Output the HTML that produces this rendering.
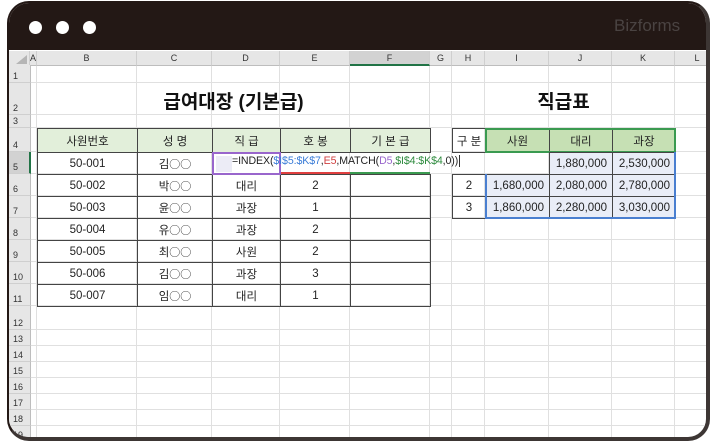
<!DOCTYPE html><html><head><meta charset="utf-8"><style>
body{margin:0;width:715px;height:440px;background:#fff;overflow:hidden;font-family:"Liberation Sans","Noto Sans CJK KR",sans-serif}
.frame{position:absolute;left:7px;top:1px;width:697px;height:434px;border:2px solid #231815;border-right:4px solid #3d3634;border-bottom:4px solid #3d3634;border-radius:22px;overflow:hidden;background:#fff}
.a{position:absolute}
.ch{position:absolute;top:48px;height:15px;background:#e6e6e6;border-right:1px solid #cfcfcf;border-bottom:1px solid #bdbdbd;font-size:9px;color:#333;text-align:center;line-height:15px;box-sizing:border-box}
.rh{position:absolute;left:0;width:22px;background:#e6e6e6;border-bottom:1px solid #cfcfcf;border-right:1px solid #bdbdbd;font-size:9px;color:#333;box-sizing:border-box;padding-left:4px;display:flex;align-items:flex-end;padding-bottom:1px}
.vl{position:absolute;top:63px;bottom:0;width:1px;background:#e0e0e0}
.hl{position:absolute;left:22px;right:0;height:1px;background:#e0e0e0}
.c{position:absolute;font-size:11.5px;color:#222;text-align:center;box-sizing:border-box;display:flex;align-items:center;justify-content:center}
.r{justify-content:flex-end;padding-right:5px}
.o{font-family:"Noto Sans CJK KR",sans-serif;font-size:11px}
</style></head><body><div class="frame" id="f">
<div class="a" style="left:0;top:0;right:0;height:47px;background:#231815"></div>
<div class="a" style="left:20px;top:18px;width:13px;height:13px;border-radius:50%;background:#fff"></div>
<div class="a" style="left:47px;top:18px;width:13px;height:13px;border-radius:50%;background:#fff"></div>
<div class="a" style="left:74px;top:18px;width:13px;height:13px;border-radius:50%;background:#fff"></div>
<div class="a" style="left:605px;top:13px;font-size:17px;color:#4a4342">Bizforms</div>
</div>
<script>
var f=document.getElementById('f');var h='';
var ox=9,oy=3;
var cols=[['',8,30],['A',30,37],['B',37,137],['C',137,212],['D',212,280],['E',280,350],['F',350,430],['G',430,452],['H',452,485],['I',485,549],['J',549,612],['K',612,675],['L',675,720]];
var rows=[[1,65,83],[2,83,115],[3,115,128],[4,128,152],[5,152,174],[6,174,196],[7,196,218],[8,218,240],[9,240,262],[10,262,284],[11,284,306],[12,306,330],[13,330,346],[14,346,362],[15,362,378],[16,378,394],[17,394,410],[18,410,426],[19,426,442]];
function box(x1,y1,x2,y2,st){return '<div class="a" style="left:'+(x1-ox)+'px;top:'+(y1-oy)+'px;width:'+(x2-x1)+'px;height:'+(y2-y1)+'px;'+st+'"></div>';}
function cell(x1,y1,x2,y2,t,cls,st){return '<div class="c '+(cls||'')+'" style="left:'+(x1-ox)+'px;top:'+(y1-oy)+'px;width:'+(x2-x1)+'px;height:'+(y2-y1)+'px;'+(st||'')+'">'+t+'</div>';}
cols.forEach(function(c){if(c[1]>8)h+='<div class="vl" style="left:'+(c[1]-ox-1)+'px"></div>';});
rows.forEach(function(r){h+='<div class="hl" style="top:'+(r[2]-oy-1)+'px"></div>';});
cols.forEach(function(c){h+='<div class="ch" style="left:'+(c[1]-ox)+'px;width:'+(c[2]-c[1])+'px;'+(c[0]=='F'?'background:#d2d2d2;border-bottom:2px solid #217346':'')+'">'+c[0]+'</div>';});
h+='<div class="a" style="left:7px;top:52px;border-left:11px solid transparent;border-bottom:9px solid #b5b5b5"></div>';
rows.forEach(function(r){h+='<div class="rh" style="top:'+(r[1]-oy)+'px;height:'+(r[2]-r[1])+'px;'+(r[0]==5?'background:#d2d2d2;border-right:2px solid #217346':'')+'">'+r[0]+'</div>';});
h+=cell(37,83,430,115,'급여대장 (기본급)','','font-size:19px;font-weight:bold;color:#111;padding-top:2px');
h+=cell(452,83,675,115,'직급표','','font-size:19px;font-weight:bold;color:#111;padding-top:2px');
var B=[37,137,212,280,350,430];var bd='border:1px solid #444;';
var hd=['사원번호','성 명','직 급','호 봉','기 본 급'];
for(var i=0;i<5;i++)h+=cell(B[i],128,B[i+1]+1,153,hd[i],'','background:#e2efda;'+bd);
var O='<span class="o">○○</span>';
var data=[['50-001','김'+O,'',''],['50-002','박'+O,'대리','2'],['50-003','윤'+O,'과장','1'],['50-004','유'+O,'과장','2'],['50-005','최'+O,'사원','2'],['50-006','김'+O,'과장','3'],['50-007','임'+O,'대리','1']];
data.forEach(function(d,k){var y=152+k*22;for(var i=0;i<5;i++)h+=cell(B[i],y,B[i+1]+1,y+23,i<4?d[i]:'','',bd+(k==0&&i>=2?'border-color:transparent;':''));});
h+=box(212,152,281,175,'border:2px solid #9966cc;box-sizing:border-box;background:#fff');
h+=box(216,156,232,172,'background:#ececf6');
h+=box(281,172,350,174,'background:#e04040');
h+=box(350,172,430,174,'background:#3a9a50');
h+='<div class="a" style="left:'+(232-ox)+'px;top:'+(155-oy)+'px;font-size:10.6px;letter-spacing:-0.1px;color:#222;white-space:nowrap">=INDEX(<span style="color:#3b7dd8">$I$5:$K$7</span>,<span style="color:#d04040">E5</span>,MATCH(<span style="color:#9966cc">D5</span>,<span style="color:#2e8b3e">$I$4:$K$4</span>,0))<span style="border-left:1px solid #333;margin-left:1px"></span></div>';
var R=[452,485,549,612,675];var rh=['구 분','사원','대리','과장'];
for(i=0;i<4;i++)h+=cell(R[i],128,R[i+1]+1,153,rh[i],'',bd+(i>0?'background:#c6e0b4;':''));
h+=box(485,128,676,153,'border:2px solid #3a9a50;box-sizing:border-box');
var rd=[['','','1,880,000','2,530,000'],['2','1,680,000','2,080,000','2,780,000'],['3','1,860,000','2,280,000','3,030,000']];
rd.forEach(function(d,k){var y=152+k*22;for(i=0;i<4;i++){var hide=(k==0&&i<2);h+=cell(R[i],y,R[i+1]+1,y+23,d[i],i>0?'r':'',(hide?'':bd)+(i>0&&!hide?'background:#e9edf7;':''));}});
h+=box(485,174,676,219,'border:2px solid #4a7fd0;border-top:none;border-right:none;box-sizing:border-box');
h+=box(674,152,676,219,'background:#4a7fd0');
f.innerHTML+=h;
</script></body></html>
